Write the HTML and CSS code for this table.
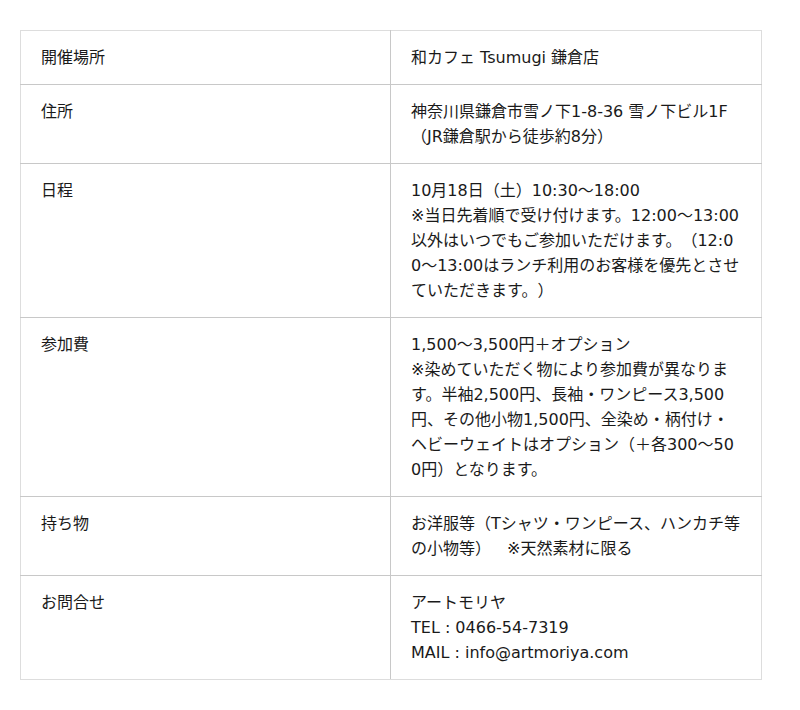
FILE: index.html
```html
<!DOCTYPE html>
<html lang="ja">
<head>
<meta charset="utf-8">
<link rel="stylesheet" href="styles.css">
</head>
<body>
<div class="page">
  <table class="info">
    <colgroup><col class="col-label"><col class="col-value"></colgroup>
    <tbody>
      <tr><th>開催場所</th><td>和カフェ Tsumugi 鎌倉店</td></tr>
      <tr><th>住所</th><td>神奈川県鎌倉市雪ノ下1-8-36 雪ノ下ビル1F<br>（JR鎌倉駅から徒歩約8分）</td></tr>
      <tr><th>日程</th><td>10月18日（土）10:30〜18:00<br>※当日先着順で受け付けます。12:00〜13:00以外はいつでもご参加いただけます。（12:00〜13:00はランチ利用のお客様を優先とさせていただきます。）</td></tr>
      <tr><th>参加費</th><td>1,500〜3,500円＋オプション<br>※染めていただく物により参加費が異なります。半袖2,500円、長袖・ワンピース3,500円、その他小物1,500円、全染め・柄付け・ヘビーウェイトはオプション（＋各300〜500円）となります。</td></tr>
      <tr><th>持ち物</th><td>お洋服等（Tシャツ・ワンピース、ハンカチ等の小物等）　※天然素材に限る</td></tr>
      <tr><th>お問合せ</th><td>アートモリヤ<br>TEL : 0466-54-7319<br>MAIL : info@artmoriya.com</td></tr>
    </tbody>
  </table>
</div>
</body>
</html>
```
FILE: styles.css
```css
html, body {
  margin: 0;
  padding: 0;
  background: #fff;
}
.page {
  padding: 30px 20px;
  font-family: "DejaVu Sans", "Noto Sans CJK JP", sans-serif;
  font-size: 16px;
  line-height: 25px;
  color: #1a1a1a;
  text-spacing-trim: space-all;
}
.info {
  width: 742px;
  table-layout: fixed;
  border-collapse: collapse;
  border: 1px solid #ddd;
}
.col-label { width: 370px; }
.info th,
.info td {
  padding: 14px 20px;
  vertical-align: top;
  text-align: left;
  font-weight: normal;
  border: 1px solid #c8c8c8;
  word-break: break-all;
}
.info th { border-left-color: #ddd; }
.info td { border-right-color: #ddd; }
.info tr:first-child th,
.info tr:first-child td { border-top-color: #ddd; }
.info tr:last-child th,
.info tr:last-child td { border-bottom-color: #ddd; }
```
